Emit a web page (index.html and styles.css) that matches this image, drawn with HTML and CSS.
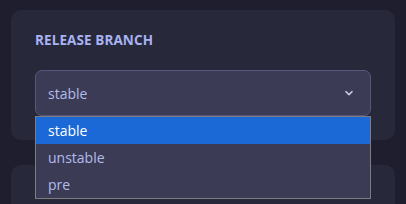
FILE: index.html
```html
<!DOCTYPE html>
<html>
<head>
<meta charset="utf-8">
<link rel="stylesheet" href="styles.css">
</head>
<body>
<div class="page">
  <section class="card">
    <div class="label">RELEASE BRANCH</div>
    <div class="field">
      <div class="select">
        <span class="value">stable</span>
        <svg class="chev" width="10" height="6" viewBox="0 0 10 6"><path d="M1.5 1.2 L5 4.6 L8.5 1.2" fill="none" stroke="#c9cbe6" stroke-width="1.6"/></svg>
      </div>
      <div class="menu">
        <div class="opt sel">stable</div>
        <div class="opt">unstable</div>
        <div class="opt">pre</div>
      </div>
    </div>
  </section>
  <section class="card card2"></section>
</div>
</body>
</html>
```
FILE: styles.css
```css
html, body { margin: 0; padding: 0; }
body {
  background: #1e1e2f;
  font-family: "Open Sans", "Noto Sans", sans-serif;
  width: 406px;
  height: 204px;
  overflow: hidden;
}
.page {
  padding: 10px 11px 0 11px;
  display: flex;
  flex-direction: column;
  gap: 25px;
}
.card {
  background: #28283b;
  border-radius: 10px;
  padding: 21px 24px 24px 24px;
}
.label {
  color: #a7b3f2;
  font-size: 13.5px;
  font-weight: 700;
  line-height: 18px;
  letter-spacing: 0.1px;
  margin-bottom: 21px;
}
.field { position: relative; }
.select {
  height: 44px;
  border: 1px solid #57577a;
  border-radius: 7px;
  background: #3b3b56;
  display: flex;
  align-items: center;
  justify-content: space-between;
  padding: 0 16px 0 12px;
}
.value {
  color: #b3bbea;
  font-size: 14px;
}
.chev { display: block; }
.menu {
  position: absolute;
  left: 0;
  right: 0;
  top: 46px;
  border: 1px solid #7d7d80;
  background: #3b3b56;
  z-index: 2;
}
.opt {
  height: 27px;
  line-height: 27px;
  padding-left: 12px;
  color: #b3bbea;
  font-size: 14px;
}
.opt.sel {
  background: #1a69d7;
  color: #ffffff;
}
.card2 { height: 40px; padding: 0; border-radius: 10px 10px 0 0; }
```
